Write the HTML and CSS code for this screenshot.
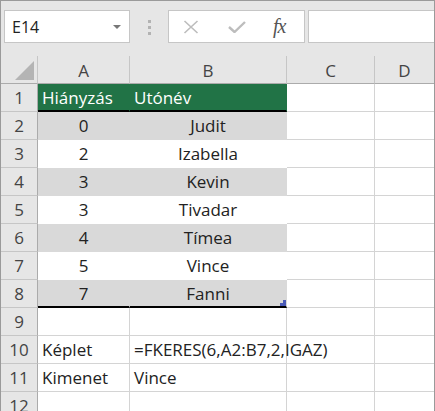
FILE: index.html
```html
<!DOCTYPE html>
<html lang="hu">
<head>
    <meta charset="UTF-8">
    <meta name="viewport" content="width=device-width, initial-scale=1.0">
    <title>FKERES példa</title>
    <link rel="stylesheet" href="styles.css">
</head>
<body>
    <div class="window">
        <div class="toolbar">
            <div class="name-box">
                <span>E14</span>
                <span class="drop-arrow"></span>
            </div>
            <div class="grip">
                <i></i><i></i><i></i>
            </div>
            <div class="fx-box">
                <svg class="icon" width="16" height="14" viewBox="0 0 16 14">
                    <path d="M1.5 1 L14.5 13 M14.5 1 L1.5 13" stroke="#bdbdbd" stroke-width="1.6" fill="none"/>
                </svg>
                <svg class="icon" width="18" height="12" viewBox="0 0 18 12">
                    <path d="M1 6 L6.5 11 L17 1" stroke="#bdbdbd" stroke-width="2.4" fill="none"/>
                </svg>
                <span class="fx">fx</span>
            </div>
            <div class="formula-input"></div>
        </div>

        <div class="sheet">
            <div class="corner"><span class="corner-tri"></span></div>
            <div class="col-head">A</div>
            <div class="col-head">B</div>
            <div class="col-head">C</div>
            <div class="col-head last">D</div>

            <div class="row-head">1</div>
            <div class="cell head-cell left">Hiányzás</div>
            <div class="cell head-cell left">Utónév</div>
            <div class="cell"></div>
            <div class="cell last"></div>

            <div class="row-head">2</div>
            <div class="cell band">0</div>
            <div class="cell band">Judit</div>
            <div class="cell"></div>
            <div class="cell last"></div>

            <div class="row-head">3</div>
            <div class="cell plain">2</div>
            <div class="cell plain">Izabella</div>
            <div class="cell"></div>
            <div class="cell last"></div>

            <div class="row-head">4</div>
            <div class="cell band">3</div>
            <div class="cell band">Kevin</div>
            <div class="cell"></div>
            <div class="cell last"></div>

            <div class="row-head">5</div>
            <div class="cell plain">3</div>
            <div class="cell plain">Tivadar</div>
            <div class="cell"></div>
            <div class="cell last"></div>

            <div class="row-head">6</div>
            <div class="cell band">4</div>
            <div class="cell band">Tímea</div>
            <div class="cell"></div>
            <div class="cell last"></div>

            <div class="row-head">7</div>
            <div class="cell plain">5</div>
            <div class="cell plain">Vince</div>
            <div class="cell"></div>
            <div class="cell last"></div>

            <div class="row-head">8</div>
            <div class="cell band table-end">7</div>
            <div class="cell band table-end">Fanni<span class="resize-handle"></span></div>
            <div class="cell"></div>
            <div class="cell last"></div>

            <div class="row-head">9</div>
            <div class="cell"></div>
            <div class="cell"></div>
            <div class="cell"></div>
            <div class="cell last"></div>

            <div class="row-head">10</div>
            <div class="cell left">Képlet</div>
            <div class="cell left">=FKERES(6,A2:B7,2,IGAZ)</div>
            <div class="cell"></div>
            <div class="cell last"></div>

            <div class="row-head">11</div>
            <div class="cell left">Kimenet</div>
            <div class="cell left">Vince</div>
            <div class="cell"></div>
            <div class="cell last"></div>

            <div class="row-head">12</div>
            <div class="cell"></div>
            <div class="cell"></div>
            <div class="cell"></div>
            <div class="cell last"></div>
        </div>
    </div>
</body>
</html>
```

FILE: styles.css
```css
body {
    margin: 0;
    font-family: "Open Sans", "Noto Sans", sans-serif;
    background: #ffffff;
}
.window {
    width: 435px;
    height: 411px;
    box-sizing: border-box;
    border: 1px solid #9a9a9a;
    border-bottom: none;
    background: #e6e6e6;
    overflow: hidden;
}
.toolbar {
    height: 55px;
    display: flex;
    align-items: flex-start;
    padding-top: 9px;
    box-sizing: border-box;
}
.name-box {
    width: 126px;
    height: 33px;
    margin-left: 3px;
    box-sizing: border-box;
    background: #ffffff;
    border: 1px solid #c6c6c6;
    display: flex;
    align-items: center;
    justify-content: space-between;
    padding: 0 8px 0 7px;
    font-size: 16px;
    color: #222222;
}
.drop-arrow {
    width: 0;
    height: 0;
    border-left: 4px solid transparent;
    border-right: 4px solid transparent;
    border-top: 4px solid #777777;
}
.grip {
    width: 38px;
    display: flex;
    flex-direction: column;
    align-items: center;
    gap: 3px;
    padding-top: 10px;
}
.grip i {
    display: block;
    width: 3px;
    height: 3px;
    background: #b3b3b3;
}
.fx-box {
    width: 137px;
    height: 33px;
    box-sizing: border-box;
    background: #ffffff;
    border: 1px solid #c6c6c6;
    display: flex;
    align-items: center;
    padding-left: 14px;
    gap: 29px;
}
.fx-box .icon {
    display: block;
}
.fx {
    font-family: "Liberation Serif", serif;
    font-style: italic;
    font-size: 20px;
    color: #555555;
    margin-left: -2px;
    letter-spacing: -1px;
}
.formula-input {
    flex: 1;
    height: 33px;
    margin-left: 3px;
    box-sizing: border-box;
    background: #ffffff;
    border: 1px solid #c6c6c6;
    border-right: none;
}
.sheet {
    display: grid;
    grid-template-columns: 37px 92px 157px 88px 1fr;
    grid-template-rows: 28px repeat(12, 28px);
    background: #ffffff;
}
.corner,
.col-head {
    background: #e6e6e6;
    border-bottom: 1px solid #ababab;
    box-sizing: border-box;
}
.corner {
    border-right: 1px solid #c6c6c6;
    position: relative;
}
.corner-tri {
    position: absolute;
    left: 14px;
    top: 5px;
    width: 0;
    height: 0;
    border-left: 19px solid transparent;
    border-bottom: 19px solid #b4b4b4;
}
.col-head {
    border-right: 1px solid #c6c6c6;
    font-size: 17px;
    color: #444444;
    display: flex;
    align-items: center;
    justify-content: center;
    padding-top: 1px;
}
.col-head.last {
    border-right: none;
}
.row-head {
    background: #e6e6e6;
    border-right: 1px solid #ababab;
    border-bottom: 1px solid #c6c6c6;
    box-sizing: border-box;
    font-size: 17px;
    color: #444444;
    display: flex;
    align-items: center;
    justify-content: center;
}
.cell {
    border-right: 1px solid #d4d4d4;
    border-bottom: 1px solid #d4d4d4;
    box-sizing: border-box;
    font-size: 17px;
    color: #222222;
    display: flex;
    align-items: center;
    justify-content: center;
    white-space: nowrap;
    position: relative;
}
.cell.last {
    border-right: none;
}
.cell.left {
    justify-content: flex-start;
    padding-left: 4px;
}
.head-cell {
    background: #217346;
    color: #ffffff;
    border-right-color: #217346;
    border-bottom: 2px solid #000000;
}
.band {
    background: #d9d9d9;
    border-right-color: #d9d9d9;
    border-bottom-color: #d9d9d9;
}
.plain {
    border-right-color: #ffffff;
    border-bottom-color: #ffffff;
}
.table-end {
    border-bottom: 2px solid #000000;
}
.resize-handle {
    position: absolute;
    right: 0;
    bottom: 0;
    width: 6px;
    height: 6px;
    background: linear-gradient(#4a5ab7, #4a5ab7) right top / 3px 3px no-repeat,
                linear-gradient(#4a5ab7, #4a5ab7) left bottom / 6px 3px no-repeat;
}
```
